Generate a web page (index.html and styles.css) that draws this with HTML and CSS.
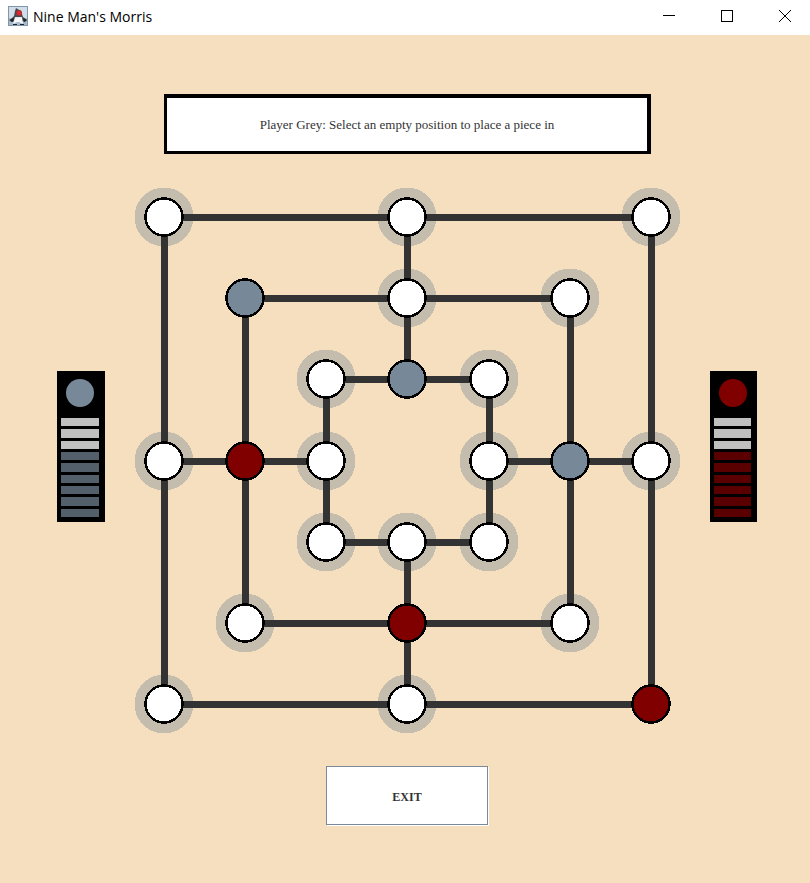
FILE: index.html
```html
<!DOCTYPE html>
<html lang="en">
<head>
<meta charset="utf-8">
<title>Nine Man's Morris</title>
<link rel="stylesheet" href="styles.css">
</head>
<body>
<header class="titlebar">
  <svg class="app-icon" viewBox="0 0 20 20" aria-hidden="true">
    <rect width="20" height="20" fill="#7e97b0"/>
    <rect x="1" y="1" width="18" height="18" fill="#d3dde7"/>
    <path d="M1 12h18v7H1z" fill="#a9bacb"/>
    <path d="M8 2l5 3 2 6 4 3-2 2-3-1-1-4-5 0-1 4-4 1-1-2 4-4 1-5z" fill="#454a50"/>
    <path d="M7 11l3 1 4-1 1 7-4-2-2 0-4 2z" fill="#f6f7f8"/>
    <path d="M1 14l5-2-1 4zM15 12l4 2-3 2zM5 18h4v1H5zM12 18h4v1h-4z" fill="#202428"/>
    <circle cx="11" cy="7" r="3" fill="#9c3438"/>
    <circle cx="11" cy="7" r="2" fill="#e3262b"/>
  </svg>
  <h1 class="title">Nine Man's Morris</h1>
  <div class="window-controls">
    <button class="window-button" type="button" aria-label="Minimize"><svg viewBox="0 0 12 12"><path d="M0 5.5h12"/></svg></button>
    <button class="window-button" type="button" aria-label="Maximize"><svg viewBox="0 0 12 12"><path d="M.5.5h11v11H.5z"/></svg></button>
    <button class="window-button close" type="button" aria-label="Close"><svg viewBox="0 0 12 12"><path d="M0 0l12 12M12 0L0 12"/></svg></button>
  </div>
</header>
<main class="game">
  <p class="message" role="status">Player Grey: Select an empty position to place a piece in</p>

  <section class="counter grey" aria-label="Grey pieces">
    <div class="token"></div>
    <div class="bars"><i class="used"></i><i class="used"></i><i class="used"></i><i></i><i></i><i></i><i></i><i></i><i></i></div>
  </section>

  <svg class="board" viewBox="0 0 547 547" role="img" aria-label="Game board">
    <g class="halos">
      <circle cx="30" cy="30" r="29.5"/><circle cx="273" cy="30" r="29.5"/><circle cx="517" cy="30" r="29.5"/>
      <circle cx="273" cy="111" r="29.5"/><circle cx="436" cy="111" r="29.5"/>
      <circle cx="192" cy="192" r="29.5"/><circle cx="355" cy="192" r="29.5"/>
      <circle cx="30" cy="274" r="29.5"/><circle cx="192" cy="274" r="29.5"/><circle cx="355" cy="274" r="29.5"/><circle cx="517" cy="274" r="29.5"/>
      <circle cx="192" cy="355" r="29.5"/><circle cx="273" cy="355" r="29.5"/><circle cx="355" cy="355" r="29.5"/>
      <circle cx="111" cy="436" r="29.5"/><circle cx="436" cy="436" r="29.5"/>
      <circle cx="30" cy="517" r="29.5"/><circle cx="273" cy="517" r="29.5"/>
    </g>
    <g class="lines">
      <path d="M30.5 30.5h486.5v487h-486.5z"/>
      <path d="M111.5 111.5h324.5v325h-324.5z"/>
      <path d="M192.5 192.5h162.5v163h-162.5z"/>
      <path d="M273.5 30v162M273.5 355v162M30 274.5h162M355 274.5h162"/>
    </g>
    <g class="pieces">
      <circle cx="30" cy="30" r="18.5"/><circle cx="273" cy="30" r="18.5"/><circle cx="517" cy="30" r="18.5"/>
      <circle class="slate" cx="111" cy="111" r="18.5"/><circle cx="273" cy="111" r="18.5"/><circle cx="436" cy="111" r="18.5"/>
      <circle cx="192" cy="192" r="18.5"/><circle class="slate" cx="273" cy="192" r="18.5"/><circle cx="355" cy="192" r="18.5"/>
      <circle cx="30" cy="274" r="18.5"/><circle class="maroon" cx="111" cy="274" r="18.5"/><circle cx="192" cy="274" r="18.5"/>
      <circle cx="355" cy="274" r="18.5"/><circle class="slate" cx="436" cy="274" r="18.5"/><circle cx="517" cy="274" r="18.5"/>
      <circle cx="192" cy="355" r="18.5"/><circle cx="273" cy="355" r="18.5"/><circle cx="355" cy="355" r="18.5"/>
      <circle cx="111" cy="436" r="18.5"/><circle class="maroon" cx="273" cy="436" r="18.5"/><circle cx="436" cy="436" r="18.5"/>
      <circle cx="30" cy="517" r="18.5"/><circle cx="273" cy="517" r="18.5"/><circle class="maroon" cx="517" cy="517" r="18.5"/>
    </g>
  </svg>

  <section class="counter red" aria-label="Red pieces">
    <div class="token"></div>
    <div class="bars"><i class="used"></i><i class="used"></i><i class="used"></i><i></i><i></i><i></i><i></i><i></i><i></i></div>
  </section>

  <button class="exit" type="button">EXIT</button>
</main>
</body>
</html>
```
FILE: styles.css
```css
* {
  box-sizing: border-box;
}

body {
  margin: 0;
  min-height: 100vh;
  background: #f5dfbf;
  color: #333;
  font-family: "Liberation Serif", serif;
}

.titlebar {
  display: flex;
  align-items: center;
  height: 35px;
  padding: 0 1px 3px 8px;
  background: #fff;
}

.app-icon {
  width: 20px;
  height: 20px;
}

.title {
  margin: 0 auto 0 5px;
  padding-top: 2px;
  color: #000;
  font: 400 14px/20px "Open Sans", sans-serif;
}

.window-controls {
  display: flex;
  gap: 10px;
}

.window-button {
  display: grid;
  place-items: center;
  width: 48px;
  height: 32px;
  padding: 0;
  border: 0;
  background: none;
}

.window-button svg {
  width: 12px;
  height: 12px;
  fill: none;
  stroke: #000;
  shape-rendering: crispEdges;
}

.window-button.close svg {
  shape-rendering: auto;
}

.game {
  display: grid;
  grid-template-columns: 57fr 48fr 29fr 547fr 29fr 47fr 53fr;
  padding: 59px 0 57px;
  align-items: start;
}

.message {
  grid-column: 4;
  height: 60px;
  margin: 0 30px 33px;
  border: solid #000;
  border-width: 4px 4px 3px 3px;
  background: #fff;
  font-size: 13px;
  line-height: 54px;
  text-align: center;
}

.board {
  grid-column: 4;
  grid-row: 2;
  display: block;
  width: 100%;
  shape-rendering: crispEdges;
}

.halos {
  fill: #c4bcac;
}

.lines {
  fill: none;
  stroke: #333;
  stroke-width: 7;
}

.pieces {
  fill: #fff;
  stroke: #000;
  stroke-width: 2.5;
}

.slate {
  fill: #778899;
}

.maroon {
  fill: #800000;
}

.counter {
  grid-row: 2;
  height: 151px;
  margin-top: 184px;
  padding: 8px 6px 5px 4px;
  background: #000;
}

.grey {
  grid-column: 2;
  --token: #778899;
  --bar: #53606b;
}

.red {
  grid-column: 6;
  --token: #800000;
  --bar: #5a0000;
}

.token {
  width: 28px;
  height: 28px;
  margin: 0 auto 11px 5px;
  border-radius: 50%;
  background: var(--token);
}

.bars {
  display: grid;
  grid-auto-rows: 1fr;
  gap: 3px;
  height: 99px;
}

.bars i {
  background: var(--bar);
}

.bars .used {
  background: #c0c0c0;
}

.exit {
  grid-column: 4;
  grid-row: 3;
  justify-self: center;
  width: 162px;
  height: 59px;
  margin: 32px 1px 1px 0;
  padding: 3px 0 0;
  border: 1px solid #7a8a99;
  background: #fff;
  box-shadow: 1px 1px #fff;
  color: #333;
  font: 700 12px "Liberation Serif", serif;
}
```
